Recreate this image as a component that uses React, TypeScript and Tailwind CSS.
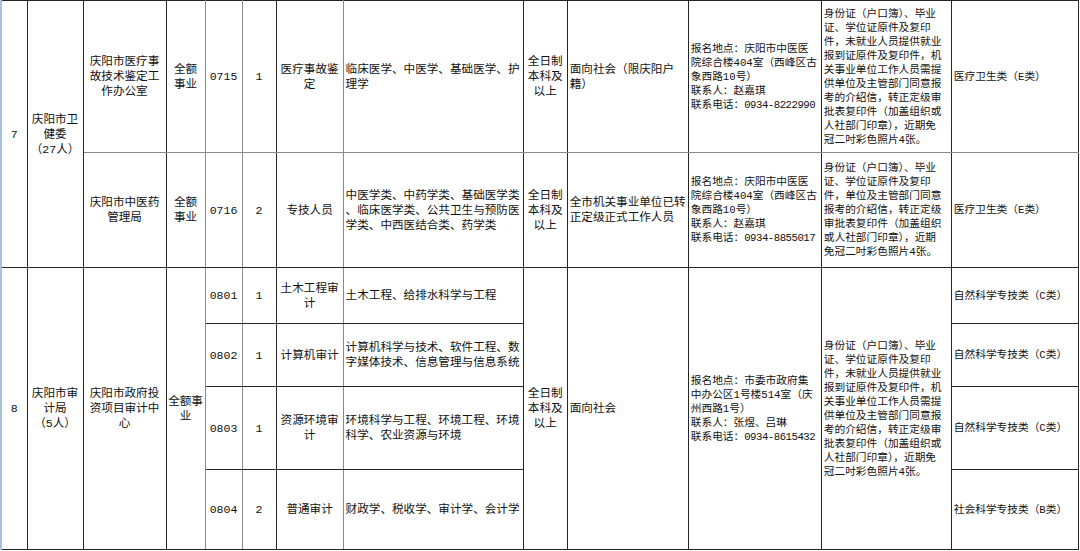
import React from "react";

const Td = ({
  children,
  className = "",
  rowSpan,
}: {
  children?: React.ReactNode;
  className?: string;
  rowSpan?: number;
}) => (
  <td
    rowSpan={rowSpan}
    className={
      "border border-[#262626] p-0 align-middle whitespace-pre overflow-hidden text-[11.6px] leading-[15px] " +
      className
    }
  >
    {children}
  </td>
);

const materialsA =
  "身份证（户口簿）、毕业\n证、学位证原件及复印\n件，未就业人员提供就业\n报到证原件及复印件，机\n关事业单位工作人员需提\n供单位及主管部门同意报\n考的介绍信，转正定级审\n批表复印件（加盖组织或\n人社部门印章），近期免\n冠二吋彩色照片4张。";

const materialsB =
  "身份证（户口簿）、毕业\n证、学位证原件及复印\n件，单位及主管部门同意\n报考的介绍信，转正定级\n审批表复印件（加盖组织\n或人社部门印章），近期\n免冠二吋彩色照片4张。";

const Address = ({ lines, phone }: { lines: string; phone: string }) => (
  <>
    {lines}
    {"\n联系电话："}
    <span className="tracking-[-0.5px]">{phone}</span>
  </>
);

// small-print columns (address / materials / category)
const small = "text-left pl-[2px] !text-[10.7px] !leading-[14px]";
const gray = "border-l-[#8a8a8a]";

export default function App() {
  return (
    <div className="w-[1080px] h-[551px] bg-white overflow-hidden text-[#111] font-['Liberation_Mono','Noto_Sans_CJK_SC',monospace]">
      <table className="table-fixed border-collapse w-[1079px] border-l-2 border-l-[#a7c2de] text-center">
        <colgroup>
          <col className="w-[26px]" />
          <col className="w-[56px]" />
          <col className="w-[83px]" />
          <col className="w-[39px]" />
          <col className="w-[37px]" />
          <col className="w-[34px]" />
          <col className="w-[67px]" />
          <col className="w-[180px]" />
          <col className="w-[44px]" />
          <col className="w-[121px]" />
          <col className="w-[133px]" />
          <col className="w-[130px]" />
          <col className="w-[127px]" />
        </colgroup>
        <tbody>
          <tr className="h-[152px]">
            <Td rowSpan={2} className="!border-l-2 !border-l-[#a7c2de]">7</Td>
            <Td rowSpan={2}>{"庆阳市卫\n健委\n（27人）"}</Td>
            <Td className="border-b-[#8a8a8a]">{"庆阳市医疗事\n故技术鉴定工\n作办公室"}</Td>
            <Td className="border-b-[#8a8a8a] border-r-[#8a8a8a]">{"全额\n事业"}</Td>
            <Td className={"border-b-[#8a8a8a] border-r-[#8a8a8a] " + gray}>0715</Td>
            <Td className={"border-b-[#8a8a8a] " + gray}>1</Td>
            <Td className="border-b-[#8a8a8a] border-r-[#8a8a8a]">{"医疗事故鉴\n定"}</Td>
            <Td className={"border-b-[#8a8a8a] text-left pl-[2px] " + gray}>
              {"临床医学、中医学、基础医学、护\n理学"}
            </Td>
            <Td className="border-b-[#8a8a8a]">{"全日制\n本科及\n以上"}</Td>
            <Td className="border-b-[#8a8a8a] text-left pl-[2px]">{"面向社会（限庆阳户\n籍）"}</Td>
            <Td className={"border-b-[#8a8a8a] " + small}>
              <Address
                lines={"报名地点：庆阳市中医医\n院综合楼404室（西峰区古\n象西路10号）\n联系人：赵嘉琪"}
                phone="0934-8222990"
              />
            </Td>
            <Td className={"border-b-[#8a8a8a] " + small}>{materialsA}</Td>
            <Td className={"border-b-[#8a8a8a] " + small}>医疗卫生类（E类）</Td>
          </tr>
          <tr className="h-[115px]">
            <Td>{"庆阳市中医药\n管理局"}</Td>
            <Td className="border-r-[#8a8a8a]">{"全额\n事业"}</Td>
            <Td className={"border-r-[#8a8a8a] " + gray}>0716</Td>
            <Td className={gray}>2</Td>
            <Td className="border-r-[#8a8a8a]">专技人员</Td>
            <Td className={"text-left pl-[2px] " + gray}>
              {"中医学类、中药学类、基础医学类\n、临床医学类、公共卫生与预防医\n学类、中西医结合类、药学类"}
            </Td>
            <Td>{"全日制\n本科及\n以上"}</Td>
            <Td className="text-left pl-[2px]">{"全市机关事业单位已转\n正定级正式工作人员"}</Td>
            <Td className={small}>
              <Address
                lines={"报名地点：庆阳市中医医\n院综合楼404室（西峰区古\n象西路10号）\n联系人：赵嘉琪"}
                phone="0934-8855017"
              />
            </Td>
            <Td className={small}>{materialsB}</Td>
            <Td className={small}>医疗卫生类（E类）</Td>
          </tr>
          <tr className="h-[56px]">
            <Td rowSpan={4} className="!border-l-2 !border-l-[#a7c2de]">8</Td>
            <Td rowSpan={4}>{"庆阳市审\n计局\n（5人）"}</Td>
            <Td rowSpan={4}>{"庆阳市政府投\n资项目审计中\n心"}</Td>
            <Td rowSpan={4} className="border-r-[#8a8a8a]">{"全额事\n业"}</Td>
            <Td className={"border-r-[#8a8a8a] " + gray}>0801</Td>
            <Td className={gray}>1</Td>
            <Td className="border-r-[#8a8a8a]">{"土木工程审\n计"}</Td>
            <Td className={"text-left pl-[2px] " + gray}>土木工程、给排水科学与工程</Td>
            <Td rowSpan={4}>{"全日制\n本科及\n以上"}</Td>
            <Td rowSpan={4} className="text-left pl-[2px]">面向社会</Td>
            <Td rowSpan={4} className={small}>
              <Address
                lines={"报名地点：市委市政府集\n中办公区1号楼514室（庆\n州西路1号）\n联系人：张煜、吕琳"}
                phone="0934-8615432"
              />
            </Td>
            <Td rowSpan={4} className={small}>{materialsA}</Td>
            <Td className={small}>自然科学专技类（C类）</Td>
          </tr>
          <tr className="h-[63px]">
            <Td className={"border-r-[#8a8a8a] " + gray}>0802</Td>
            <Td className={gray}>1</Td>
            <Td className="border-r-[#8a8a8a]">计算机审计</Td>
            <Td className={"text-left pl-[2px] " + gray}>
              {"计算机科学与技术、软件工程、数\n字媒体技术、信息管理与信息系统"}
            </Td>
            <Td className={small}>自然科学专技类（C类）</Td>
          </tr>
          <tr className="h-[83px]">
            <Td className={"border-r-[#8a8a8a] " + gray}>0803</Td>
            <Td className={gray}>1</Td>
            <Td className="border-r-[#8a8a8a]">{"资源环境审\n计"}</Td>
            <Td className={"text-left pl-[2px] " + gray}>
              {"环境科学与工程、环境工程、环境\n科学、农业资源与环境"}
            </Td>
            <Td className={small}>自然科学专技类（C类）</Td>
          </tr>
          <tr className="h-[80px]">
            <Td className={"border-r-[#8a8a8a] " + gray}>0804</Td>
            <Td className={gray}>2</Td>
            <Td className="border-r-[#8a8a8a]">普通审计</Td>
            <Td className={"text-left pl-[2px] " + gray}>财政学、税收学、审计学、会计学</Td>
            <Td className={small}>社会科学专技类（B类）</Td>
          </tr>
        </tbody>
      </table>
    </div>
  );
}
